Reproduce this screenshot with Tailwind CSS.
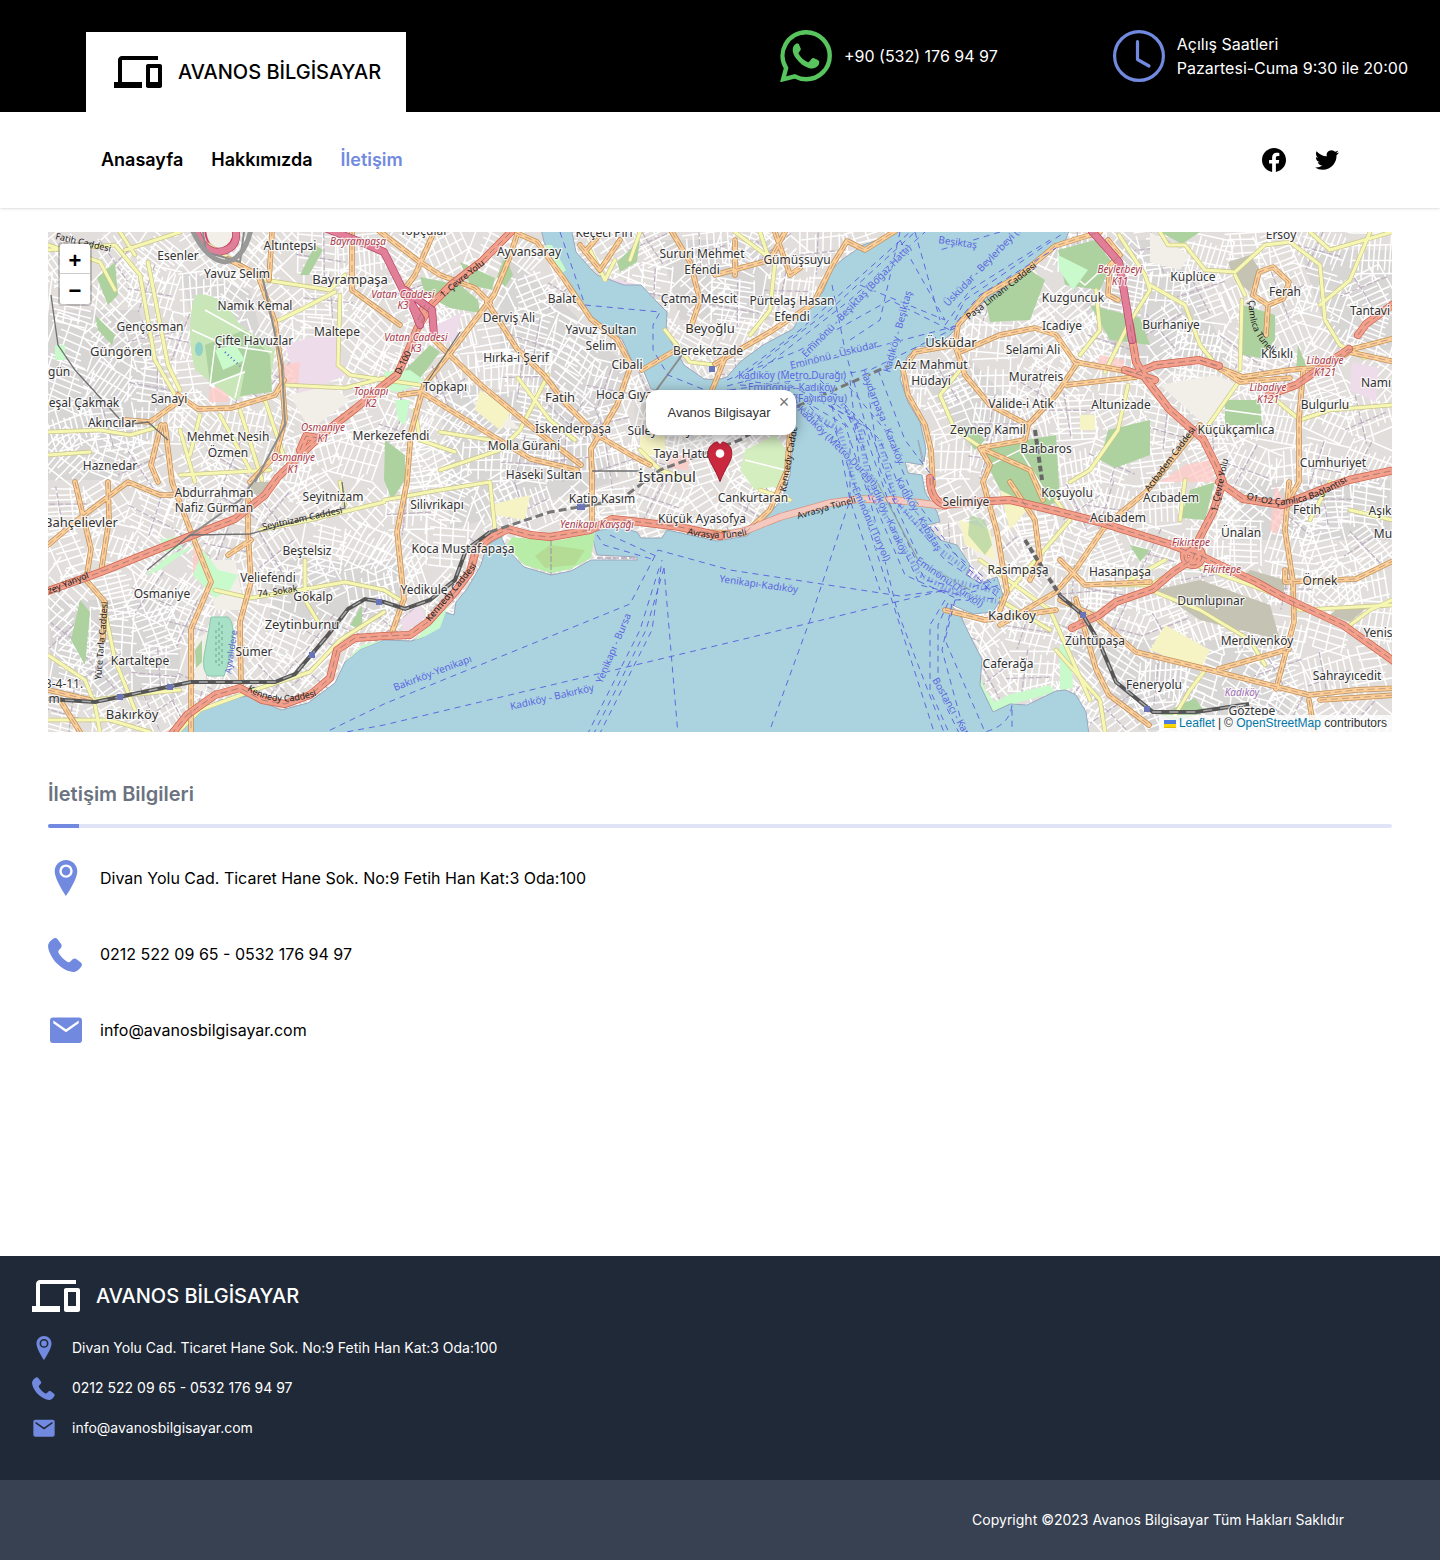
<!DOCTYPE html>
<html lang="tr">
<head>
<meta charset="utf-8">
<meta name="viewport" content="width=device-width, initial-scale=1">
<title>Avanos Bilgisayar - İletişim</title>
<script src="https://cdn.jsdelivr.net/npm/@tailwindcss/browser@4"></script>
</head>
<body class="flex min-h-screen flex-col bg-white font-['Inter',sans-serif] text-base text-black">

<svg class="hidden" aria-hidden="true">
  <symbol id="i-devices" viewBox="0 0 24 24"><path fill="currentColor" d="M4 6h18V4H4c-1.1 0-2 .9-2 2v11H0v3h14v-3H4V6zm19 2h-6c-.55 0-1 .45-1 1v10c0 .55.45 1 1 1h6c.55 0 1-.45 1-1V9c0-.55-.45-1-1-1zm-1 9h-4v-7h4v7z"/></symbol>
  <symbol id="i-pin" viewBox="0 0 36 36"><path fill="currentColor" fill-rule="evenodd" d="M18 0C11.7 0 6.7 5 6.7 11.2C6.7 19.5 18 36 18 36s11.300-16.500 11.300-24.800C29.300 5 24.300 0 18 0zM18 4.400a6.700 6.700 0 1 1 0 13.400a6.700 6.700 0 1 1 0-13.400zM18 6.800a4.300 4.300 0 1 0 0 8.600a4.300 4.300 0 1 0 0-8.600z"/></symbol>
  <symbol id="i-phone" viewBox="0 0 36 36"><path fill="currentColor" d="M6.200 2.200C3.500 3.600.3 6.500.1 9.600C-.3 14 4 22.500 9 27.500C14.500 33 21.500 36.300 26.500 35.900C29.500 35.600 32.600 32.200 33.800 29.600C34.200 28.600 33.900 27.400 33.100 26.700L28.600 23.200C27.400 22.300 25.800 22.300 24.700 23.200C23.600 24.200 22 26.600 20.400 26.200C17.500 25.400 11.400 19.400 10.300 16.200C9.800 14.600 11.600 13.200 12.900 11.900C13.900 10.800 14 9.200 13.100 8L9.400 3C8.600 2 7.300 1.700 6.200 2.200z"/></symbol>
  <symbol id="i-mail" viewBox="0 0 36 36"><path fill="currentColor" fill-rule="evenodd" d="M5 5.500h26a3 3 0 0 1 3 3v19.500a3 3 0 0 1-3 3H5a3 3 0 0 1-3-3V8.500a3 3 0 0 1 3-3zM5.300 8.600v2.600L18 20.200l12.700-9V8.600L18 17.300z"/></symbol>
</svg>

<header>
  <div class="flex h-28 items-center justify-between bg-black pr-8 pl-[86px] text-white">
    <a href="#" class="flex h-20 w-80 items-center gap-4 self-end bg-white pl-7 text-xl font-medium text-black">
      <svg class="size-12" aria-hidden="true"><use href="#i-devices"/></svg>
      <span>AVANOS BİLGİSAYAR</span>
    </a>
    <div class="flex items-center gap-[115px]">
      <a href="#" class="flex items-center gap-3">
        <svg class="size-[52px] text-[#57c45e]" viewBox="0 0 52 52" aria-hidden="true">
          <path fill="none" stroke="currentColor" stroke-width="4.400" stroke-linejoin="miter" d="M26.200 2.200a23.500 23.500 0 0 1 0 47.100c-4.200 0-8-1-11.400-2.900L3.100 49.300l3-11.200A23.500 23.500 0 0 1 26.200 2.200z"/>
          <path fill="currentColor" d="M17 13.600c-1.600 0-4.300 2.500-4.300 6.300s2.600 7.300 3.700 8.900c3.400 4.600 7.700 8 13 9.400c3.600.9 7.500-.4 9-2.900c.9-1.500 1-3.300.7-4.100c-.3-.7-4.600-2.900-5.600-3.100c-.9-.2-1.500.1-2.100.9l-2 2.600c-.6.700-1.100.8-1.900.4c-3.700-1.600-6.800-4.300-8.700-8c-.5-.9-.2-1.300.4-2l1.400-1.900c.4-.6.3-1.100.1-1.700l-1.900-4.300c-.4-.6-1-.5-1.800-.5z"/>
        </svg>
        <span>+90 (532) 176 94 97</span>
      </a>
      <div class="flex items-center gap-3">
        <svg class="size-[52px] text-[#718ae0]" viewBox="0 0 52 52" fill="none" stroke="currentColor" stroke-width="3.200" stroke-linecap="round" stroke-linejoin="round" aria-hidden="true"><circle cx="26" cy="26" r="24.400"/><path d="M24.500 11.500v18L36 36"/></svg>
        <p>Açılış Saatleri<br>Pazartesi-Cuma 9:30 ile 20:00</p>
      </div>
    </div>
  </div>
  <div class="flex h-24 items-center justify-between px-[101px] shadow-sm">
    <nav class="flex gap-7 text-lg font-semibold">
      <a href="#">Anasayfa</a>
      <a href="#">Hakkımızda</a>
      <a href="#" class="text-[#718ae0]" aria-current="page">İletişim</a>
    </nav>
    <div class="flex gap-[29px]">
      <a href="#" aria-label="Facebook"><svg class="size-6" viewBox="0 0 24 24" aria-hidden="true"><path d="M24 12.073c0-6.627-5.373-12-12-12s-12 5.373-12 12c0 5.990 4.388 10.954 10.125 11.854v-8.385H7.078v-3.470h3.047V9.430c0-3.007 1.792-4.669 4.533-4.669 1.312 0 2.686.235 2.686.235v2.953H15.830c-1.491 0-1.956.925-1.956 1.874v2.250h3.328l-.532 3.470h-2.796v8.385C19.612 23.027 24 18.062 24 12.073z"/></svg></a>
      <a href="#" aria-label="Twitter"><svg class="size-6" viewBox="0 0 24 24" aria-hidden="true"><path d="M23.953 4.570a10 10 0 01-2.825.775 4.958 4.958 0 002.163-2.723c-.951.555-2.005.959-3.127 1.184a4.920 4.920 0 00-8.384 4.482C7.690 8.095 4.067 6.130 1.640 3.162a4.822 4.822 0 00-.666 2.475c0 1.710.870 3.213 2.188 4.096a4.904 4.904 0 01-2.228-.616v.060a4.923 4.923 0 003.946 4.827 4.996 4.996 0 01-2.212.085 4.936 4.936 0 004.604 3.417 9.867 9.867 0 01-6.102 2.105c-.390 0-.779-.023-1.170-.067a13.995 13.995 0 007.557 2.209c9.053 0 13.998-7.496 13.998-13.985 0-.210 0-.420-.015-.630A9.935 9.935 0 0024 4.590z"/></svg></a>
    </div>
  </div>
</header>

<main class="flex-1 px-12 pt-6 pb-52">
  <div class="relative h-[500px] overflow-hidden bg-[#f2efe9] font-['Liberation_Sans',sans-serif]">
    <svg class="block h-full w-full" viewBox="48 232 1344 500" preserveAspectRatio="xMidYMid slice" fill="none" role="img" aria-label="İstanbul haritası">
      <defs>
        <g id="coral">
          <path d="M40 594L101 572L188 537L235 519L265 495L278 477L311 445L325 432L355 409L384 385L397 375L409 349L417 329L431 305L451 285L481 262L511 232"/>
          <path d="M171 735L187 715L215 695L240 688L262 700L285 704L310 695L330 678L337 650L355 638L384 636L410 635L428 622L455 592L470 572L476 550L490 538L508 529L530 535L550 537L590 530L612 519L640 522L680 527L720 536"/>
          <path d="M930 478Q930 500 945 505L973 502L1010 500L1056 511L1099 522L1169 544L1203 557L1256 582L1283 597L1343 625L1395 662"/>
          <path d="M1130 325L1136 362L1146 379L1169 409L1203 439L1216 465L1223 482L1213 512L1199 539L1193 559L1173 572L1153 589L1116 602L1099 615L1072 628"/>
          <path d="M1136 373L1156 365L1199 360L1219 366M1219 482L1243 499L1283 505L1323 489L1349 480L1395 470"/>
          <path d="M1269 395L1296 385L1319 369L1349 349M1358 335L1366 324L1395 303"/>
          <path d="M1184 556a9 9 0 1 0 18 0a9 9 0 1 0-18 0M300 450L306 436L318 438M1125 370L1155 380M418 320L425 305"/>
        </g>
        <g id="magenta"><path d="M325 228L368 245L384 252L394 272L404 292L421 319M1091 230L1119 262L1128 315L1132 340M405 290L432 310L434 335M410 300L420 325M195 225Q200 250 217 252Q238 250 236 232"/></g>
        <g id="orange">
          <path d="M517 235L509 259L494 295L451 352L424 385L411 432L407 482L397 532L404 599L391 635"/>
          <path d="M505 228L537 242L564 279L591 319L617 339L631 365L617 405L591 449L592 472L592 522"/>
          <path d="M487 302L517 349L544 375L567 405L597 435L631 455L650 465"/>
          <path d="M434 340L481 385L534 429L581 465M400 395L421 392L481 429L531 459L577 470"/>
          <path d="M378 230L417 260L440 275L475 288L490 303M434 232L415 275L404 290"/>
          <path d="M178 395L198 409L231 408L275 395L284 380M228 259L258 275L275 322L281 365L285 419L276 455L250 482"/>
          <path d="M125 420L150 422L178 402M161 425L151 465L158 482M165 425L172 482L191 532L211 582L191 629L191 735"/>
          <path d="M75 482L91 549L86 580L105 602L103 640M108 482L109 520L101 572M48 545L80 518L128 482L160 495L175 495"/>
          <path d="M248 500L248 532L251 582L240 622L241 685M228 555L251 540"/>
          <path d="M715 364L770 332L813 304L833 264L847 241L865 250L900 228M715 275L770 260L785 232M775 232L790 275L800 268"/>
          <path d="M642 370L676 350M707 402L717 378L727 352M790 430L787 470L770 510L745 533L700 532"/>
          <path d="M1055 246L1020 275L985 295L958 325L955 345L965 375L990 405L1028 425L1056 395L1078 362"/>
          <path d="M955 345L915 352L903 370L908 395L925 425L931 450L933 485M1028 425L1025 440L980 448L990 465L983 482L997 532L1007 592L1000 610"/>
          <path d="M960 352L1000 335L1035 328L1056 335L1075 362L1136 373M1066 385L1136 377M1043 500L1030 470L985 450"/>
          <path d="M1200 425L1160 475L1146 492L1106 525L1076 569L1056 592L1000 625M1010 482L1035 520L1040 560L1030 580"/>
          <path d="M1060 600L1093 615L1136 652L1206 669L1309 695L1356 690L1395 688M1060 560L1085 585L1150 582"/>
          <path d="M1289 482L1285 530L1293 582L1294 622L1276 689M1289 649L1219 669M1303 372L1299 419L1299 482L1289 500"/>
          <path d="M1395 560L1356 579L1285 582L1285 570M1076 599L1096 669L1109 695L1149 725M1309 700L1315 735M1320 700L1395 695"/>
          <path d="M1253 295L1259 272L1273 267L1289 282L1283 299L1268 305L1253 295M1268 305L1266 335"/>
          <path d="M1200 360L1243 377L1289 370L1323 367L1349 352L1395 362M1349 350L1395 338M1219 368L1240 382L1290 378"/>
          <path d="M1058 245L1080 238L1100 232M1108 240L1120 255L1110 265L1108 295L1118 300M269 280L272 232M352 232L352 290L400 325"/>
          <path d="M580 245L600 270L620 240M672 232L690 262L700 300L690 330M605 228L585 252M735 240L735 275"/>
          <path d="M945 610L985 620L1056 610M60 700L80 732M48 690L90 700"/>
        </g>
        <g id="yellow">
          <path d="M48 250L115 245L140 275L155 360L175 395M120 232L135 255M125 250L180 232M200 240L265 280L330 290L345 275"/>
          <path d="M48 245L100 262L115 290M148 262L168 365L180 390M48 432L100 430L130 435L165 425M48 455L90 452"/>
          <path d="M285 385L345 388L384 378M340 295L338 365L350 375L420 385M275 322L300 310L335 292"/>
          <path d="M180 430L195 482M200 415L190 455M220 415L250 470M240 410L262 480M265 400L285 460M180 475L270 470"/>
          <path d="M215 590L250 598L300 590L345 582L384 590L400 600M384 502L310 520L260 530M305 560L305 600L320 625"/>
          <path d="M175 735L200 710L260 688L310 672L340 640L384 612M345 505L340 482M384 500L440 490L490 482L495 530"/>
          <path d="M518 378L550 420L575 440M548 375L520 430L500 450L440 470M415 410L420 440L455 452M440 432L490 440"/>
          <path d="M95 700L130 695L180 690M48 655L85 680L95 705L100 732M48 720L110 720L150 732M103 602L115 660L135 710"/>
          <path d="M735 232L775 262L770 310L750 335M760 232L770 262M640 232L630 260M590 250L605 280L615 260M665 330L690 362L715 365"/>
          <path d="M1160 232L1168 245L1185 245L1205 270L1235 272L1265 245L1290 242L1320 265L1325 320L1340 345L1365 358"/>
          <path d="M1119 235L1145 275L1150 290L1128 325L1105 372M1150 285L1185 305L1200 345L1220 370M1242 300L1240 370M1235 275L1245 295"/>
          <path d="M1096 290L1100 330L1080 355M1240 380L1205 430M1128 385L1118 430L1090 470L1070 482M1310 232L1330 250L1392 232"/>
          <path d="M1205 555L1150 585L1110 585M1195 565L1250 585L1290 600L1300 610L1392 605M1150 590L1200 610L1250 640L1265 665"/>
          <path d="M1350 625L1370 610L1392 600M1370 232L1350 280L1320 305M1392 405L1330 410L1300 420L1270 395M1056 650L1100 700L1105 732"/>
          <path d="M960 370L940 395L955 430L985 450M1010 590L1070 520L1056 500M1000 600L1050 630M1165 560L1130 580M1206 669L1190 690L1175 715"/>
          <path d="M1392 520L1350 510M1330 482L1310 520M980 560L1050 610L1090 700M1185 480L1180 520M790 500L760 490M640 450L660 470L690 480"/>
        </g>
        <g id="rail">
          <path d="M48 699L95 702L191 682L275 682L295 674L328 635L348 609L365 599L384 602L405 609L430 600L455 580L466 550L490 532"/>
          <path d="M1059 595L1083 615L1099 642L1116 682L1153 712L1196 712L1249 704"/>
        </g>
        <path id="t-kennedy" d="M247 690Q280 713 330 690"/>
        <path id="t-camlica" d="M1249 300Q1247 330 1268 350L1285 362"/>
        <path id="t-baglanti" d="M1246 498Q1290 516 1341 485L1360 474"/>
        <path id="t-avrasya" d="M687 534Q710 541 742 536L760 532"/>
      </defs>
      <rect x="-400" y="232" width="2240" height="500" fill="#e2dedc"/>
      <g fill="#d8d5d5">
        <path d="M48 310h90l40 90-60 80H48zM180 270l70 20 20 80-60 20zM440 380l120 20 60 80-170 50zM500 250l70 60 60 60-30 80-100-100zM1040 240l130 0 60 120-100 20zM1240 480h150v60h-150zM1060 640h230v90h-150zM270 560h130v60H270zM50 600h130v100H50zM660 240h110v80h-90zM1300 250h92v100h-60zM910 360l60 0 60 60-60 30z"/>
      </g>
      <g id="streets" stroke="#fff" stroke-width="1.500"></g>
      <g id="lanes" stroke="#bfb2c2" stroke-width="1.300" stroke-dasharray="6 2"></g>
      <g fill="#efdcea"><path d="M285 345L335 330L345 375L300 395zM597 275L640 285L665 312L650 300L600 290zM437 325L462 312L455 340L440 345zM1352 362L1378 368L1376 402L1350 390zM400 620L420 605L425 618L405 632z"/></g>
      <g fill="#f2efe9"><path d="M1160 385L1215 375L1240 385L1205 425zM290 395L330 385L350 400L310 430zM205 560L235 560L245 610L215 610zM195 640L210 630L205 690L195 690zM470 400L500 405L520 430L495 425zM955 520L1000 540L1003 585L985 570zM1150 232L1190 255L1180 270L1150 262z"/></g>
      <g fill="#ffc9c6" opacity=".75"><path d="M210 388L230 386L228 402L209 402zM283 365L300 362L298 385L287 383zM670 455L690 455L688 470L668 468zM1185 465L1210 460L1215 482L1160 482zM1100 355L1125 360L1122 372L1095 370zM193 540L208 555L205 580L193 575zM1275 485L1287 505L1277 535L1270 530z"/></g>
      <g fill="#c5c3b4"><path d="M1228 262L1250 255L1260 270L1250 292L1235 280zM1155 590L1200 580L1270 605L1280 640L1200 620zM1250 570L1285 580L1283 600L1240 580zM1335 610L1370 605L1350 622L1330 615zM1170 650h25v10h-25zM250 482h25l-5 12h-18z"/></g>
      <g fill="#f6f4c4"><path d="M490 505L530 495L525 520L495 515zM480 390L512 410L500 430L475 410zM960 520L990 530L995 560L965 545zM1165 625L1210 650L1200 670L1150 650zM190 310L215 300L245 335L215 350zM1000 490L1035 500L1010 530zM640 435h25v20h-25zM1080 415h15v15h-15z"/></g>
      <g fill="#aed1a0">
        <path d="M195 295Q220 290 240 325L275 350L270 385L235 400L195 370Q185 330 195 295z" fill="#c8e6b8"/>
        <path d="M205 345L245 330L270 355L272 392L240 396L245 370L210 385z"/>
        <path d="M97 278L115 262L118 295L108 305zM95 315L115 335L112 345L98 330z"/>
        <path d="M420 277L460 285L478 300L480 313L450 308L425 295zM460 262L495 278L492 290L470 285zM405 370L430 345L440 352L415 385zM505 255l8 20l-8 12l-8-10z"/>
        <path d="M385 440L405 455L405 480L392 500L384 480zM617 262L640 240L637 262L620 272z"/>
        <path d="M1058 250L1095 240L1112 262L1100 290L1065 285zM1090 305L1140 318L1150 345L1110 340zM1160 232h40l-18 12zM985 300L1030 270L1045 280L1030 320L990 322z"/>
        <path d="M980 450L1025 440L1056 435L1060 500L1040 510L1000 490zM970 425L985 440L975 450L960 430zM1108 430L1150 420L1150 455L1115 468L1100 460z"/>
        <path d="M1225 400L1260 400L1262 425L1225 425zM1243 305L1275 315L1275 340L1260 358L1243 355zM1190 490L1215 482L1205 520L1180 518zM1298 345l10 25h-12z"/>
        <path d="M745 450L775 435L790 455L785 485L755 490L740 470zM950 595L985 600L975 612z" fill="#d4eec0"/>
        <path d="M71 640L80 600L90 612L85 665zM195 650L202 640L202 662L196 668zM350 625L362 605L362 630z"/>
        <path d="M970 515L985 520L992 545L985 555L968 535z" opacity=".7"/>
        <path d="M1160 715L1195 698L1205 712L1175 722zM1130 545L1150 550L1140 562zM300 275l15-30l8 5l-14 25z"/>
      </g>
      <g stroke="#fff" stroke-width="1.500"><path d="M192 330L225 345L272 352M205 310L250 335L235 398M215 345L210 385L245 372M990 465L1020 450L1050 500M1060 265L1085 285L1110 262M1225 410L1262 415M745 460L785 470"/></g>
      <g fill="#c8facc"><path d="M384 372L410 370L424 380L400 392L384 390zM395 400L410 400L405 425L398 420zM145 575L170 555L195 545L160 570zM193 575l10-25l15 20l20 5l-8 15l-15 8zM1060 645L1070 640L1073 688L1060 690zM55 345l10 0v15h-10zM1058 255l30 15l-15 20l-14-20zM975 660L985 690L995 702L1008 695L1050 685L1055 692L1010 705L993 714L978 690zM215 350l20-6l10 16l-22 10zM160 540l18-4l4 12l-18 4z"/></g>
      <path d="M211 617h17q8 6 4 35l-8 24h-16q-6-6-4-20z" fill="#a9e0c8" stroke="#8cc8ac"/>
      <path d="M222 625v42M219 622v44M216 630v35" stroke="#66a98b" stroke-dasharray="3 3"/>
      <ellipse cx="199" cy="349" rx="4" ry="7" fill="#8fd0c8"/><path d="M225 352L240 366" stroke="#4a5fd0" stroke-dasharray="1 3" stroke-width="2"/>
      <path d="M205 225Q205 250 222 249Q236 243 234 225z" fill="#f2efe9" stroke="#d8436c" stroke-width="2"/>

      <g fill="#aad3df" stroke="#9aa8bd" stroke-width="1">
        <path d="M171 735L195 713L221 700L248 696L281 710L308 703L335 683L345 662L361 649L384 640L411 641L424 637L444 612L454 615L456 602L467 589L481 565L487 545L501 537L507 549L524 567L551 575L571 571L591 560L637 560L637 557L597 555L591 532L617 527L637 532L641 538L662 538L667 530L717 541L747 536L765 519L782 499L790 475L794 432L790 415L770 402L740 394L700 394L668 392L651 389L644 372L631 359L622 339L597 325L584 312L571 289L557 269L544 242L541 228L571 228L576 252L591 269L597 275L624 285L641 285L657 302L667 312L666 332L674 347L684 365L704 379L717 380L727 377L740 362L763 345L793 329L807 305L823 292L832 269L843 259L863 245L893 235L903 228L1070 228L1066 239L1053 250L1030 269L1003 289L970 312L950 335L937 345L917 347L907 357L900 379L908 402L920 422L926 449L924 462L918 440L923 465L905 462L908 473L922 475L925 492L937 512L940 522L927 525L940 540L957 545L970 565L966 575L980 583L997 577L1003 595L993 612L973 614L950 604L960 615L973 642L982 659L980 685L993 712L1010 704L1027 705L1056 691L1066 690L1076 695L1086 712L1089 735z"/>
      </g>
      <path d="M507 545L524 565L551 573L571 569L591 558L595 533L555 541L512 537z" fill="#b8eda8"/>
      <path d="M535 556L550 545L585 550L575 565L545 568z" fill="#b4dc94"/>
      <path d="M415 640L440 612L450 600L440 628L424 637zM345 662L361 649L384 640L362 645zM545 245L560 275L566 270L552 245z" fill="#c8facc"/>
      <path d="M551 540v35M597 558h38" stroke="#a08aa8" stroke-dasharray="6 2"/>

      <g stroke-linejoin="round" stroke-linecap="round">
        <use href="#yellow" stroke="#c9c48a" stroke-width="4.500"/><use href="#yellow" stroke="#f6f7b2" stroke-width="3.200"/>
        <use href="#orange" stroke="#c2905a" stroke-width="5.500"/><use href="#orange" stroke="#fbcf97" stroke-width="4"/>
        <path d="M720 536L745 531L780 517L830 503L860 499L895 500L945 506" stroke="#dd8f7c" stroke-width="7.500" stroke-dasharray="4 2"/><path d="M720 536L745 531L780 517L830 503L860 499L895 500L945 506" stroke="#f4cac0" stroke-width="6"/>
        <use href="#coral" stroke="#cc6650" stroke-width="8"/><use href="#coral" stroke="#f29f8c" stroke-width="6.500"/>
        <use href="#magenta" stroke="#b84869" stroke-width="8"/><use href="#magenta" stroke="#e27f98" stroke-width="6.500"/>
      </g>
      <g stroke="#a2746b" stroke-dasharray="7 4" stroke-width=".8"><use href="#coral"/><use href="#orange" opacity=".7"/></g>
      <path d="M203 232L206 252L240 262L244 232M262 275L282 365L285 425L255 482M188 537L240 500L262 470" stroke="#8c8c8c" stroke-width="2"/>
      <path d="M190 225Q205 260 225 262Q245 260 252 225" stroke="#999" stroke-width="5"/>
      <path d="M147 570L190 535L250 534L345 508L342 482M424 387L460 332M51 295L58 345L75 370L125 425L148 422L168 440M592 471L640 471" stroke="#707070" stroke-width="1.300"/>
      <path d="M655 392L682 355" stroke="#8c8c8c" stroke-width="2"/>
      <use href="#rail" stroke="#555" stroke-width="4"/><use href="#rail" stroke="#aaa" stroke-width="1.400" stroke-dasharray="9 8"/>
      <path d="M490 532L550 512L620 500L660 470L740 440L800 405L895 363" stroke="#777" stroke-width="3" stroke-dasharray="8 4"/>
      <path d="M1025 540L1050 580L1060 595M1035 430L1042 480" stroke="#666" stroke-width="4" stroke-dasharray="6 3"/>
      <g fill="#6a74b8"><path d="M709 366h6v6h-6zM117 694h6v6h-6zM167 684h6v6h-6zM309 652h6v6h-6zM376 599h6v6h-6zM577 502h8v8h-8zM1080 612h6v6h-6zM1144 706h6v6h-6z"/></g>

      <g stroke="#6068e0" stroke-width="1" stroke-dasharray="6 5">
        <path d="M560 232L585 305L660 312L653 325V350L668 375L705 390M320 735L384 704L630 604L658 550L730 570L900 596L945 590L740 640L384 725L330 735"/>
        <path d="M587 735L640 630L660 565M593 735L646 630L664 568M599 735L652 630L662 560M664 568L678 735M597 535L604 545L655 560M610 535L656 556"/>
        <path d="M771 727L810 620L850 500L850 440M727 380L800 350L890 300L950 330M727 386L960 325M730 390L870 370L955 328M735 378L800 330L910 232M740 378L830 310L915 232"/>
        <path d="M745 382L850 300L925 232M832 285L845 350L870 440M850 340L880 320L900 232M915 232L940 320M860 285L945 320M945 325L970 290L1050 240M950 330L980 295L1056 248M900 240L945 320M1000 232L940 250M955 320L965 300L1065 232"/>
        <path d="M780 395L835 430L860 500L895 610L935 735M785 390L845 425L870 500L897 610L945 735M790 385L855 420L880 500L920 585L960 595"/>
        <path d="M800 388L862 425L888 500L925 580L970 590M810 385L870 430L895 500L945 560L990 590M820 380L880 440L905 500L950 550L1000 590M835 370L885 430L915 500L960 560L1000 600"/>
        <path d="M830 395L850 500L880 590M850 380L860 470L905 575L960 600M865 370L880 470L920 560L975 605M878 370L905 440L935 480M945 600L930 625V690L950 735M948 603L938 625V690L960 735M952 604L942 650L965 735M955 600L945 640L985 732Q1010 725 1012 705V735"/>
        <path d="M727 390L800 395L830 430M740 385L820 390L850 430M755 382L840 395L862 450M955 600L1000 598M960 595L1000 585M962 590L995 580"/>
      </g>
      <g stroke="#5d66e8" stroke-width="5" stroke-dasharray="1 3 2 2" opacity=".5"><path d="M840 400L860 430L870 490L920 575L960 595M880 440L895 500L940 550L1000 595M780 395L840 430L856 490M940 590L1000 602M950 580L998 592"/></g>
      <path d="M877 482L918 560L970 590" stroke="#8e9e9e" stroke-width="1.200"/>

      <g class="font-['Noto_Sans',sans-serif] text-[12px]" fill="#333" stroke="#fff" stroke-opacity=".75" stroke-width="2.500" paint-order="stroke" stroke-linejoin="round" text-anchor="middle">
        <text x="178" y="260">Esenler</text><text x="290" y="250">Altıntepsi</text><text x="237" y="278">Yavuz Selim</text><text x="350" y="284" class="text-[13px]">Bayrampaşa</text>
        <text x="255" y="310">Namık Kemal</text><text x="150" y="331">Gençosman</text><text x="337" y="336">Maltepe</text><text x="254" y="345">Çifte Havuzlar</text>
        <text x="121" y="356" class="text-[13px]">Güngören</text><text x="48" y="376" text-anchor="start">gün</text><text x="169" y="403">Sanayi</text><text x="84" y="407">eşal Çakmak</text><text x="112" y="427">Akıncılar</text>
        <text x="228" y="441">Mehmet Nesih</text><text x="228" y="457">Özmen</text><text x="110" y="470">Haznedar</text><text x="391" y="440">Merkezefendi</text><text x="214" y="497">Abdurrahman</text><text x="214" y="512">Nafiz Gürman</text>
        <text x="333" y="501">Seyitnizam</text><text x="81" y="527" class="text-[13px]">Bahçelievler</text><text x="307" y="555">Beştelsiz</text><text x="268" y="582">Veliefendi</text><text x="162" y="598">Osmaniye</text><text x="313" y="601">Gökalp</text>
        <text x="302" y="629" class="text-[13px]">Zeytinburnu</text><text x="254" y="656">Sümer</text><text x="140" y="665">Kartaltepe</text><text x="64" y="688">3-4-11.</text><text x="54" y="703">m</text><text x="132" y="719" class="text-[13px]">Bakırköy</text>
        <text x="424" y="235">Topçular</text><text x="604" y="237">Keçeci Piri</text><text x="529" y="256">Ayvansaray</text><text x="702" y="258">Sururi Mehmet</text><text x="702" y="274">Efendi</text><text x="562" y="303">Balat</text><text x="699" y="303">Çatma Mescit</text>
        <text x="509" y="322">Derviş Ali</text><text x="601" y="334">Yavuz Sultan</text><text x="601" y="350">Selim</text><text x="710" y="333" class="text-[13px]">Beyoğlu</text><text x="516" y="362">Hırka-i Şerif</text><text x="708" y="355">Bereketzade</text><text x="627" y="369">Cibali</text>
        <text x="445" y="391">Topkapı</text><text x="560" y="402" class="text-[13px]">Fatih</text><text x="627" y="399">Hoca Gıyas</text><text x="573" y="433">İskenderpaşa</text><text x="524" y="450">Molla Gürani</text><text x="663" y="435">Süleymaniye</text><text x="685" y="458">Taya Hatun</text>
        <text x="544" y="479">Haseki Sultan</text><text x="667" y="482" class="text-[15px]">İstanbul</text><text x="602" y="503">Katip Kasım</text><text x="437" y="509">Silivrikapı</text><text x="702" y="523">Küçük Ayasofya</text><text x="753" y="502">Cankurtaran</text><text x="463" y="553">Koca Mustafapaşa</text><text x="424" y="594">Yedikule</text>
        <text x="797" y="264">Gümüşsuyu</text><text x="792" y="305">Pürtelaş Hasan</text><text x="792" y="321">Efendi</text><text x="951" y="347" class="text-[13px]">Üsküdar</text><text x="931" y="369">Aziz Mahmut</text><text x="931" y="385">Hüdayi</text><text x="1073" y="302">Kuzguncuk</text><text x="1062" y="330">Icadiye</text>
        <text x="1033" y="354">Selami Ali</text><text x="1036" y="381">Muratreis</text><text x="1021" y="408">Valide-i Atik</text><text x="988" y="434">Zeynep Kamil</text><text x="1046" y="453">Barbaros</text><text x="1121" y="409">Altunizade</text><text x="966" y="506">Selimiye</text><text x="1067" y="497">Koşuyolu</text>
        <text x="1018" y="574">Rasimpaşa</text><text x="1012" y="620" class="text-[13px]">Kadıköy</text><text x="1008" y="668">Caferağa</text><text x="1281" y="239">Ersoy</text><text x="1193" y="281">Küplüce</text><text x="1285" y="296">Ferah</text><text x="1171" y="329">Burhaniye</text><text x="1370" y="315">Tantavi</text><text x="1277" y="358">Kısıklı</text>
        <text x="1376" y="387">Namı</text><text x="1325" y="409">Bulgurlu</text><text x="1236" y="434">Küçükçamlıca</text><text x="1333" y="467">Cumhuriyet</text><text x="1171" y="502">Acıbadem</text><text x="1118" y="522">Acıbadem</text><text x="1241" y="537">Ünalan</text><text x="1307" y="514">Fetih</text><text x="1380" y="515">Aşık</text><text x="1383" y="538">Mu</text>
        <text x="1120" y="576">Hasanpaşa</text><text x="1320" y="585">Örnek</text><text x="1211" y="605">Dumlupınar</text><text x="1095" y="645">Zühtüpaşa</text><text x="1257" y="645">Merdivenköy</text><text x="1378" y="637">Yenis</text><text x="1154" y="689">Feneryolu</text><text x="1347" y="680">Sahrayıcedit</text><text x="1252" y="715">Göztepe</text>
        <g fill="#a83a4a" font-style="italic" class="text-[10px]">
          <text x="358" y="245">Bayrampaşa</text><text x="403" y="298">Vatan Caddesi</text><text x="403" y="309">K3</text><text x="416" y="341">Vatan Caddesi</text><text x="416" y="352">K3</text><text x="371" y="395">Topkapı</text><text x="371" y="407">K2</text><text x="323" y="431">Osmaniye</text><text x="323" y="442">K1</text><text x="293" y="461">Osmaniye</text><text x="293" y="473">K1</text>
          <text x="597" y="528">Yenikapı Kavşağı</text><text x="1120" y="273">Beylerbeyi</text><text x="1120" y="285">K11</text><text x="1325" y="364">Libadiye</text><text x="1325" y="376">K121</text><text x="1268" y="391">Libadiye</text><text x="1268" y="403">K121</text><text x="1191" y="546">Fikirtepe</text><text x="1222" y="573">Fikirtepe</text><text x="1242" y="696" fill="#a070b0">Kadıköy</text>
        </g>
      </g>
      <g class="font-['Noto_Sans',sans-serif] text-[9px]" fill="#222">
        <text><textPath href="#t-kennedy">Kennedy Caddesi</textPath></text><text><textPath href="#t-camlica">Çamlıca Tüneli</textPath></text><text><textPath href="#t-baglanti">O1-O2 Çamlıca Bağlantısı</textPath></text><text><textPath href="#t-avrasya">Avrasya Tüneli</textPath></text>
        <text transform="translate(443 298) rotate(-39)">1. Çevre Yolu</text><text transform="translate(400 375) rotate(-63)">D-100</text><text transform="translate(430 622) rotate(-50)">Kennedy Caddesi</text><text transform="translate(786 492) rotate(-80)">Kennedy Cadde</text>
        <text transform="translate(263 530) rotate(-12)">Seyitnizam Caddesi</text><text transform="translate(969 320) rotate(-38)">Paşa Limanı Caddesi</text><text transform="translate(1149 492) rotate(-53)">Acıbadem Caddesi</text><text transform="translate(798 519) rotate(-16)">Avrasya Tüneli</text>
        <text transform="translate(101 680) rotate(-85)">Yüce Tarla Caddesi</text><text transform="translate(231 674) rotate(-82)" fill="#5a68c8">Ayvalıdere</text>
        <text transform="translate(258 597) rotate(-8)">74. Sokak</text><text transform="translate(55 239) rotate(13)">Fatih Caddesi</text><text transform="translate(49 594) rotate(-22)">zey Yanyol</text><text transform="translate(1217 512) rotate(-78)">1. Çevre Yolu</text>
      </g>
      <g class="font-['Noto_Sans',sans-serif] text-[10px]" fill="#5d66e0" stroke="#aad3df" stroke-width="1.500" paint-order="stroke">
        <text transform="translate(395 691) rotate(-21)">Bakırköy-Yenikapı</text><text transform="translate(511 710) rotate(-13)">Kadıköy - Bakırköy</text><text transform="translate(602 684) rotate(-67)">Yenikapı - Bursa</text><text transform="translate(719 582) rotate(8)">Yenikapı-Kadıköy</text>
        <text transform="translate(806 358) rotate(-46)">Eminönü - Beşiktaş (Boğaz Hattı)</text><text transform="translate(791 369) rotate(-14)">Eminönü - Üsküdar</text><text transform="translate(738 379)">Kadıköy (Metro Durağı)</text><text transform="translate(748 391)">Eminönü - Kadıköy</text><text transform="translate(795 402)">(Fayırboyu)</text>
        <text transform="translate(890 373) rotate(-75)">Kadıköy - Beşiktaş</text><text transform="translate(860 370) rotate(68)">Haydarpaşa - Karaköy</text><text transform="translate(948 307) rotate(-46)">Üsküdar - Beylerbeyi (Boğaz)</text><text transform="translate(938 243) rotate(8)">Beşiktaş</text>
        <text transform="translate(852 489) rotate(66)">Eminönü (Turyol)</text><text transform="translate(868 480) rotate(66)">Kadıköy - Karaköy</text><text transform="translate(895 480) rotate(60)">Kadıköy - Kabataş</text><text transform="translate(915 562) rotate(35)">Eminönü (Turyol)</text><text transform="translate(932 680) rotate(60)">Bostancı - Kar</text><text transform="translate(797 410) rotate(45)">Kadıköy (Metro Durağı)</text>
      </g>
    </svg>

    <div class="absolute top-[10px] left-[10px] flex w-[34px] flex-col rounded-[4px] border-2 border-black/20 bg-white bg-clip-padding text-[22px] leading-[34px] font-bold">
      <button type="button" aria-label="Yakınlaştır" class="h-[30px] border-b border-[#ccc]">+</button>
      <button type="button" aria-label="Uzaklaştır" class="h-[30px]">−</button>
    </div>

    <svg class="absolute top-[209px] left-1/2 h-[41px] w-[25px] -translate-x-1/2" viewBox="0 0 25 41" aria-hidden="true"><path d="M12.500.5C5.900.5.500 5.900.500 12.500C.5 20 7 26 12.500 40.500C18 26 24.500 20 24.500 12.500C24.500 5.900 19.100.5 12.500.5z" fill="#c9283e" stroke="#9c1c31"/><circle cx="12.500" cy="12.500" r="4.300" fill="#fff"/></svg>
    <svg class="absolute top-[202px] left-1/2 h-[10px] w-[20px] -translate-x-1/2" viewBox="0 0 20 10" aria-hidden="true"><path d="M0 0H20L10 10z" fill="#fff"/></svg>
    <div class="absolute top-[158px] left-1/2 flex h-[45px] w-[150px] -translate-x-[74px] items-center justify-center rounded-xl bg-white text-[13px] text-[#333] shadow-[0_3px_14px_rgba(0,0,0,0.4)]">
      <p class="pr-1 leading-4">Avanos Bilgisayar</p>
      <button type="button" aria-label="Kapat" class="absolute top-0 right-0 size-6 text-lg leading-6 text-[#757575]">×</button>
    </div>

    <div class="absolute right-0 bottom-0 flex items-center gap-[3px] bg-white/80 px-[5px] text-[12px] leading-[17px] text-[#333]">
      <a href="#" class="flex items-center gap-[3px] text-[#0078a8]"><svg class="h-2 w-3" viewBox="0 0 12 8" aria-hidden="true"><path fill="#4c7be1" d="M0 0h12v4H0z"/><path fill="#ffd500" d="M0 4h12v3H0z"/><path fill="#e0bc00" d="M0 7h12v1H0z"/></svg>Leaflet</a>
      <span>|</span><span>© <a href="#" class="text-[#0078a8]">OpenStreetMap</a> contributors</span>
    </div>
  </div>

  <section class="mt-12">
    <h1 class="text-xl font-semibold text-[#6b7280]">İletişim Bilgileri</h1>
    <div class="mt-4 h-1 overflow-hidden rounded-full bg-[#e1e4f7]"><div class="h-full w-[31px] bg-[#718ae0]"></div></div>
    <ul class="mt-8 flex flex-col gap-10">
      <li class="flex items-center gap-4"><svg class="size-9 text-[#718ae0]" aria-hidden="true"><use href="#i-pin"/></svg>Divan Yolu Cad. Ticaret Hane Sok. No:9 Fetih Han Kat:3 Oda:100</li>
      <li class="flex items-center gap-4"><svg class="size-9 text-[#718ae0]" aria-hidden="true"><use href="#i-phone"/></svg>0212 522 09 65 - 0532 176 94 97</li>
      <li class="flex items-center gap-4"><svg class="size-9 text-[#718ae0]" aria-hidden="true"><use href="#i-mail"/></svg>info@avanosbilgisayar.com</li>
    </ul>
  </section>
</main>

<footer class="text-white">
  <div class="flex h-56 flex-col gap-4 bg-[#1f2937] px-8 pt-4">
    <a href="#" class="flex items-center gap-4 text-xl font-medium"><svg class="size-12" aria-hidden="true"><use href="#i-devices"/></svg>AVANOS BİLGİSAYAR</a>
    <ul class="flex flex-col gap-4 text-sm">
      <li class="flex items-center gap-4"><svg class="size-6 text-[#718ae0]" aria-hidden="true"><use href="#i-pin"/></svg>Divan Yolu Cad. Ticaret Hane Sok. No:9 Fetih Han Kat:3 Oda:100</li>
      <li class="flex items-center gap-4"><svg class="size-6 text-[#718ae0]" aria-hidden="true"><use href="#i-phone"/></svg>0212 522 09 65 - 0532 176 94 97</li>
      <li class="flex items-center gap-4"><svg class="size-6 text-[#718ae0]" aria-hidden="true"><use href="#i-mail"/></svg>info@avanosbilgisayar.com</li>
    </ul>
  </div>
  <div class="flex h-20 items-center justify-end bg-[#374151] px-24 text-sm">Copyright ©2023 Avanos Bilgisayar Tüm Hakları Saklıdır</div>
</footer>

<script>
  // Fills the map's land with small neighbourhoods of side streets.
  (function () {
    let seed = 7;
    const rnd = () => (seed = (seed * 16807) % 2147483647) / 2147483647;
    const seg = (cx, cy, a, u1, v1, u2, v2) => {
      const c = Math.cos(a), s = Math.sin(a);
      const p = (u, v) => (cx + u * c - v * s).toFixed(1) + ' ' + (cy + u * s + v * c).toFixed(1);
      return 'M' + p(u1, v1) + 'L' + p(u2, v2);
    };
    let d = '', l = '';
    for (let x = 60; x < 1400; x += 42) {
      for (let y = 245; y < 740; y += 42) {
        const cx = x + rnd() * 16, cy = y + rnd() * 16, a = rnd() * 3.14, step = 5 + rnd() * 3;
        for (let v = -24; v < 24; v += step) {
          const from = -26 + rnd() * 16, to = 26 - rnd() * 16;
          d += seg(cx, cy, a, from, v, to, v + rnd() * 3);
        }
        for (let u = -24; u < 26; u += 10 + rnd() * 8) d += seg(cx, cy, a, u, -24, u + rnd() * 4, 22);
        if (rnd() > 0.6) l += seg(cx, cy, a, -24, 4, 26, 8) + seg(cx, cy, a, 2, -20, 6, 24);
      }
    }
    const add = (id, path) => {
      const el = document.createElementNS('http://www.w3.org/2000/svg', 'path');
      el.setAttribute('d', path);
      document.getElementById(id).appendChild(el);
    };
    add('streets', d);
    add('lanes', l);
  })();
</script>
</body>
</html>
